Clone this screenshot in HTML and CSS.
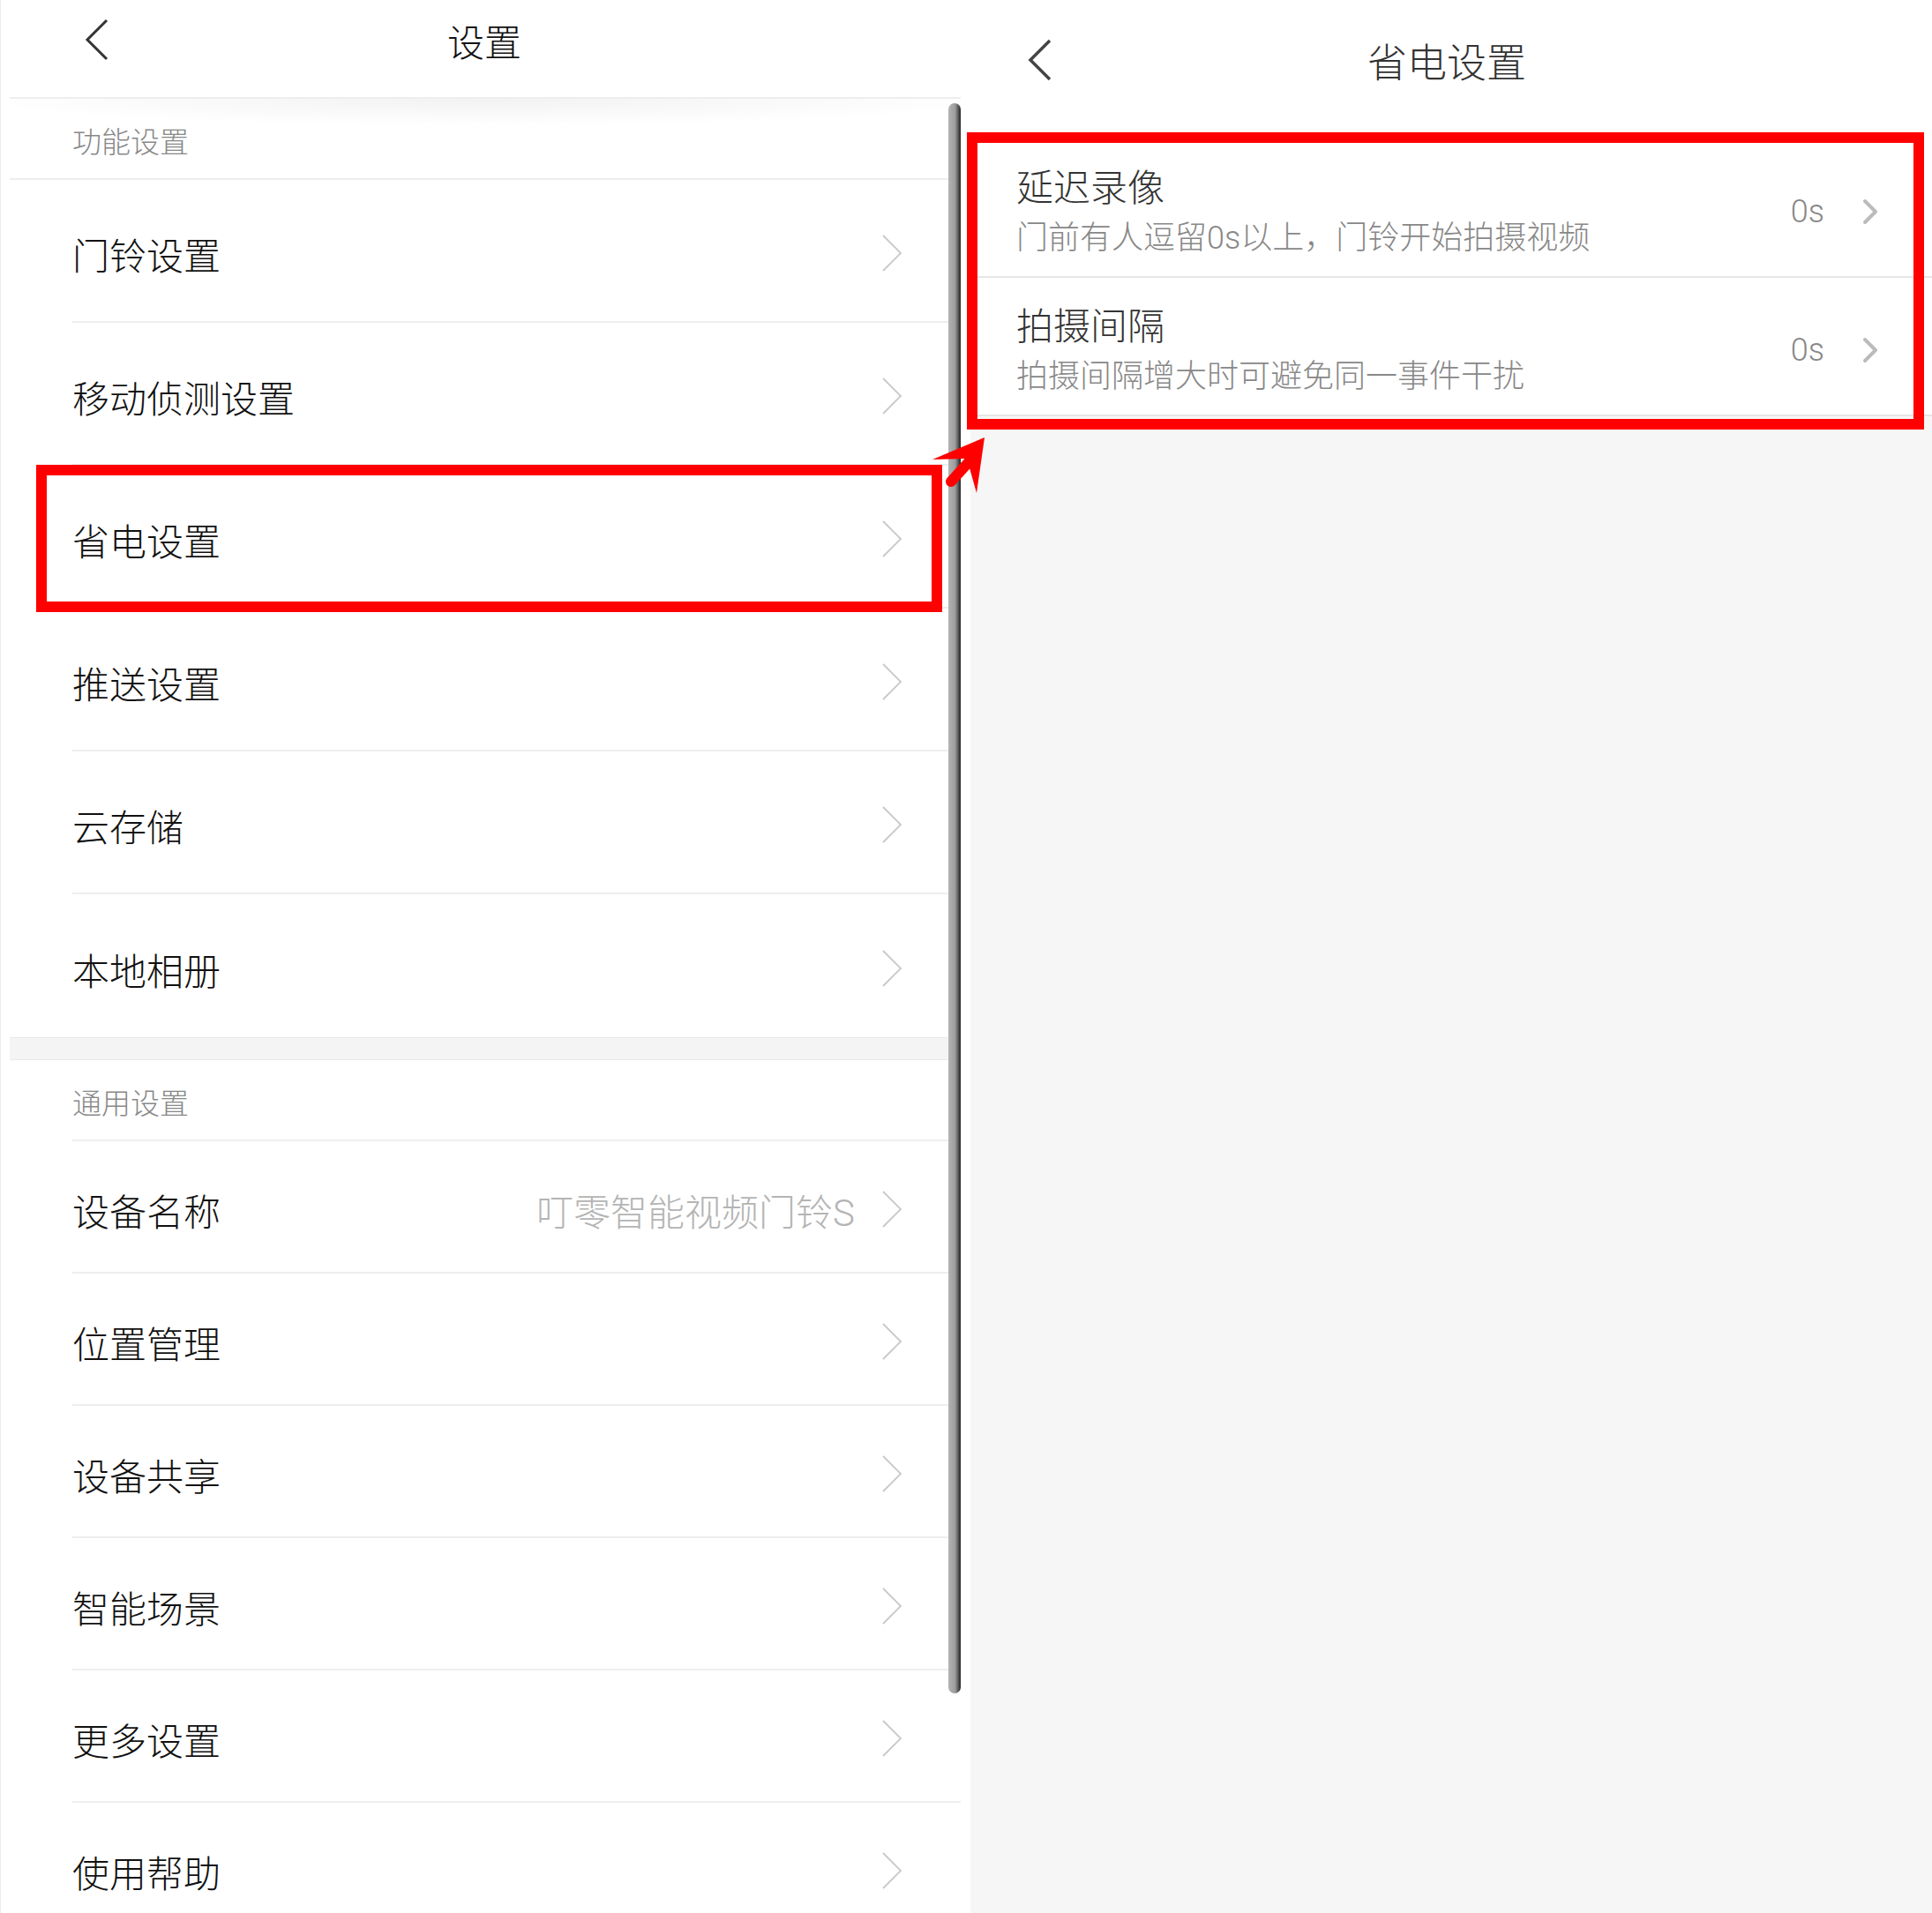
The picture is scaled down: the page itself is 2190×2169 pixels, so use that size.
FILE: index.html
```html
<!DOCTYPE html>
<html lang="zh-CN">
<head>
<meta charset="UTF-8">
<meta name="viewport" content="width=device-width, initial-scale=1.0">
<title>省电设置</title>
<link rel="stylesheet" href="styles.css">
</head>
<body>
    <div class="wrapper">
        <!-- 왼쪽 : 설정 목록 -->
        <div id="setting-area">
            <div class="top-bar">
                <div class="top-left">
                    <svg class="back" width="30" height="48" viewBox="0 0 30 48"><polyline points="26,2 4,24 26,46"/></svg>
                </div>
                <div class="top-title">设置</div>
                <div></div>
            </div>
            <div class="group-title shade">功能设置</div>
            <ul class="menu">
                <li><span>门铃设置</span><svg class="go" width="24" height="44" viewBox="0 0 24 44"><polyline points="2,2 22,22 2,42"/></svg></li>
                <li><span>移动侦测设置</span><svg class="go" width="24" height="44" viewBox="0 0 24 44"><polyline points="2,2 22,22 2,42"/></svg></li>
                <li><span>省电设置</span><svg class="go" width="24" height="44" viewBox="0 0 24 44"><polyline points="2,2 22,22 2,42"/></svg></li>
                <li><span>推送设置</span><svg class="go" width="24" height="44" viewBox="0 0 24 44"><polyline points="2,2 22,22 2,42"/></svg></li>
                <li><span>云存储</span><svg class="go" width="24" height="44" viewBox="0 0 24 44"><polyline points="2,2 22,22 2,42"/></svg></li>
                <li><span>本地相册</span><svg class="go" width="24" height="44" viewBox="0 0 24 44"><polyline points="2,2 22,22 2,42"/></svg></li>
            </ul>
            <div class="gap-band"></div>
            <div class="group-title">通用设置</div>
            <ul class="menu small">
                <li><span>设备名称</span><span class="right-side"><span class="value">叮零智能视频门铃S</span><svg class="go" width="24" height="44" viewBox="0 0 24 44"><polyline points="2,2 22,22 2,42"/></svg></span></li>
                <li><span>位置管理</span><svg class="go" width="24" height="44" viewBox="0 0 24 44"><polyline points="2,2 22,22 2,42"/></svg></li>
                <li><span>设备共享</span><svg class="go" width="24" height="44" viewBox="0 0 24 44"><polyline points="2,2 22,22 2,42"/></svg></li>
                <li><span>智能场景</span><svg class="go" width="24" height="44" viewBox="0 0 24 44"><polyline points="2,2 22,22 2,42"/></svg></li>
                <li><span>更多设置</span><svg class="go" width="24" height="44" viewBox="0 0 24 44"><polyline points="2,2 22,22 2,42"/></svg></li>
                <li><span>使用帮助</span><svg class="go" width="24" height="44" viewBox="0 0 24 44"><polyline points="2,2 22,22 2,42"/></svg></li>
            </ul>
            <div class="scroll-bar"></div>
        </div>

        <!-- 오른쪽 : 省电设置 -->
        <div id="power-area">
            <div class="top-bar power-top">
                <div class="top-left">
                    <svg class="back" width="30" height="48" viewBox="0 0 30 48"><polyline points="26,2 4,24 26,46"/></svg>
                </div>
                <div class="top-title">省电设置</div>
                <div></div>
            </div>
            <ul class="power-list">
                <li>
                    <div class="power-text">
                        <div class="power-name">延迟录像</div>
                        <div class="power-desc">门前有人逗留0s以上，门铃开始拍摄视频</div>
                    </div>
                    <div class="power-value">0s<svg class="go-bold" width="20" height="32" viewBox="0 0 20 32"><polyline points="4,4 16,16 4,28"/></svg></div>
                </li>
                <li>
                    <div class="power-text">
                        <div class="power-name">拍摄间隔</div>
                        <div class="power-desc">拍摄间隔增大时可避免同一事件干扰</div>
                    </div>
                    <div class="power-value">0s<svg class="go-bold" width="20" height="32" viewBox="0 0 20 32"><polyline points="4,4 16,16 4,28"/></svg></div>
                </li>
            </ul>
        </div>
    </div>

    <!-- 빨간 표시 (주석용 오버레이) -->
    <div class="mark mark-left"></div>
    <div class="mark mark-right"></div>
    <svg class="mark-arrow" width="90" height="90" viewBox="1040 480 90 90">
        <line x1="1078" y1="546" x2="1098" y2="524"/>
        <polygon points="1116,496 1057,521 1096,520 1107,559"/>
    </svg>
</body>
</html>
```

FILE: styles.css
```css
html, body{
    margin:0;
    padding:0;
}
body{
    width:2190px;
    height:2169px;
    overflow:hidden;
    background:#fff;
    font-family:Roboto, "Noto Sans CJK SC", sans-serif;
    font-weight:300;
    position:relative;
}
ul{
    list-style:none;
    margin:0;
    padding:0;
}

.wrapper{
    display:flex;
    height:100%;
}

/* ---------- 왼쪽 ---------- */
#setting-area{
    width:1100px;
    flex:none;
    box-sizing:border-box;
    padding-left:10px;
    padding-right:11px;
    background:#fff;
    border-left:1px solid #ececec;
    position:relative;
    overflow:hidden;
}
.top-bar{
    display:grid;
    grid-template-columns:1fr auto 1fr;
    align-items:center;
    height:112px;
    box-sizing:border-box;
    padding-bottom:20px;
    padding-right:2px;
    border-bottom:2px solid #eeeeee;
}
.top-left{
    padding-left:84px;
    display:flex;
    align-items:center;
}
.back polyline{
    fill:none;
    stroke:#333;
    stroke-width:3;
}
.top-title{
    font-size:42px;
    color:#111;
}
.group-title{
    height:92px;
    box-sizing:border-box;
    margin-left:71px;
    padding-left:0;
    padding-top:4px;
    display:flex;
    align-items:center;
    font-size:33px;
    color:#888;
    border-bottom:2px solid #eeeeee;
}
.shade{
    margin-left:0;
    padding-left:71px;
    background:radial-gradient(ellipse 55% 30px at 50% 0, #f2f2f2, rgba(255,255,255,0) 100%);
}
.menu{
    margin-left:71px;
}
.menu li{
    height:162px;
    box-sizing:border-box;
    padding-left:0;
    padding-right:66px;
    padding-top:6px;
    display:flex;
    align-items:center;
    justify-content:space-between;
    font-size:42px;
    color:#111;
    border-bottom:2px solid #eeeeee;
}
.menu li:last-child{
    border-bottom:none;
}
.menu.small li{
    height:150px;
    border-bottom:2px solid #eeeeee;
}
.go polyline{
    fill:none;
    stroke:#c8c8c8;
    stroke-width:1.8;
}
.right-side{
    display:flex;
    align-items:center;
}
.value{
    color:#b4b4b4;
    margin-right:30px;
}
.gap-band{
    height:26px;
    background:#f4f4f4;
    border-top:1px solid #e9e9e9;
    border-bottom:1px solid #e9e9e9;
    box-sizing:border-box;
}
.scroll-bar{
    position:absolute;
    left:1074px;
    top:117px;
    width:14px;
    height:1803px;
    border-radius:7px;
    background:linear-gradient(to right, #b4b4b4, #9c9c9c 55%, #666 75%, #222);
}

/* ---------- 오른쪽 ---------- */
#power-area{
    flex:1;
    background:#f6f6f6;
}
.power-top{
    height:158px;
    background:#fff;
    border-bottom:none;
    padding-bottom:22px;
    padding-right:10px;
}
.power-top .top-left{
    padding-left:64px;
}
.power-top .back polyline{
    stroke:#444;
    stroke-width:3.5;
}
.power-top .top-title{
    font-size:45px;
    color:#333;
}
.power-list{
    background:#fff;
}
.power-list li{
    height:157px;
    box-sizing:border-box;
    padding-left:52px;
    padding-right:60px;
    display:flex;
    justify-content:space-between;
    align-items:center;
    border-bottom:2px solid #e6e6e6;
}
.power-text{
    padding-top:12px;
}
.power-name{
    font-size:42px;
    line-height:56px;
    color:#333;
}
.power-desc{
    font-size:36px;
    line-height:56px;
    color:#888;
}
.power-value{
    display:flex;
    align-items:center;
    font-size:36px;
    color:#888;
    margin-top:8px;
}
.go-bold{
    margin-left:42px;
}
.go-bold polyline{
    fill:none;
    stroke:#bbb;
    stroke-width:4;
    stroke-linecap:round;
    stroke-linejoin:round;
}

/* ---------- 빨간 표시 ---------- */
.mark{
    position:absolute;
    border:12px solid #ff0000;
    box-sizing:border-box;
}
.mark-left{
    left:41px;
    top:527px;
    width:1027px;
    height:167px;
}
.mark-right{
    left:1096px;
    top:150px;
    width:1085px;
    height:337px;
}
.mark-arrow{
    position:absolute;
    left:1040px;
    top:480px;
}
.mark-arrow line{
    stroke:#ff0000;
    stroke-width:12;
    stroke-linecap:round;
}
.mark-arrow polygon{
    fill:#ff0000;
}
```
